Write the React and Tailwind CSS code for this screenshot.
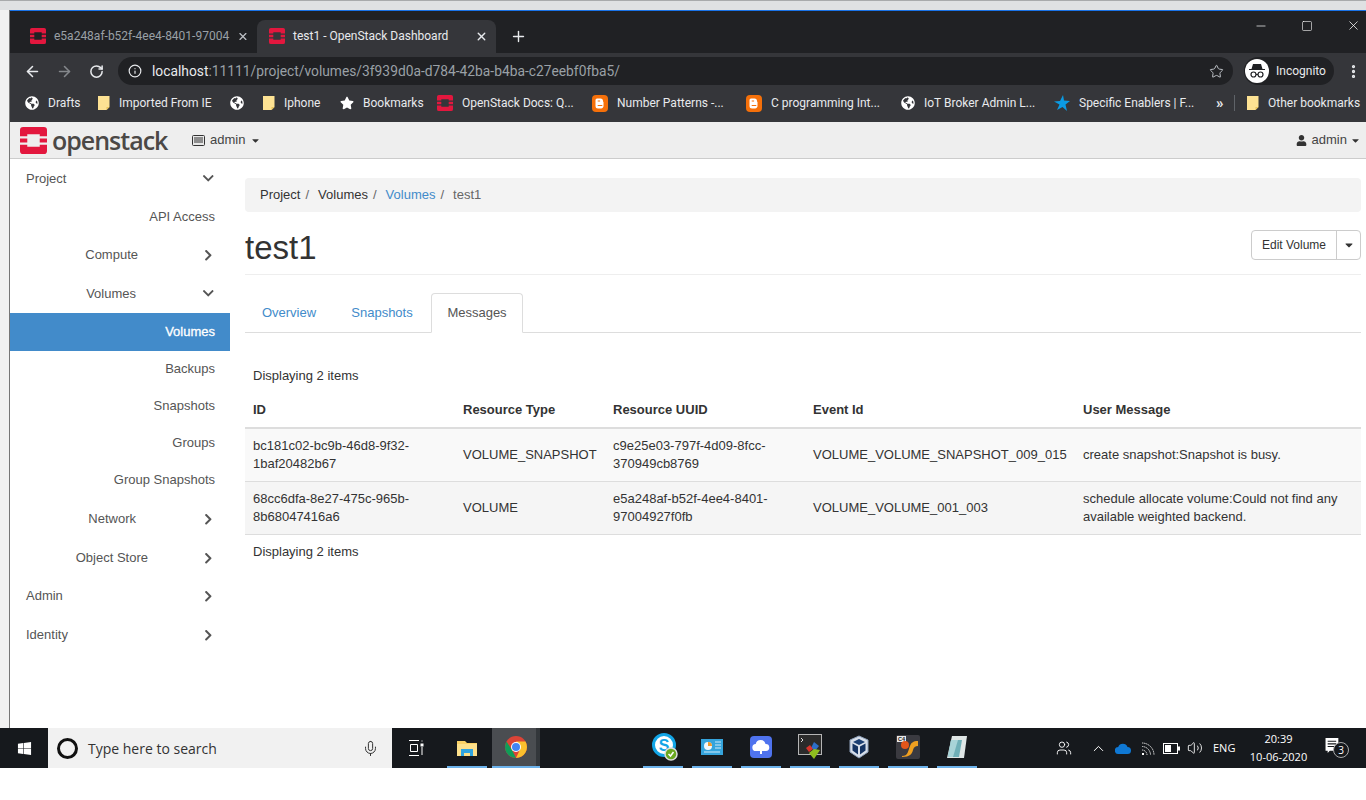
import React from "react";
import { ArrowLeft, ArrowRight, RotateCw, Info, Star, X, Plus, Minus, Square, EllipsisVertical, Mic, ChevronUp, Volume2, Users } from "lucide-react";
import { FaChevronDown, FaChevronRight, FaUser, FaCaretDown, FaGlobeAmericas, FaWindows, FaStar } from "react-icons/fa";

const sans = "font-['Liberation_Sans',Arial,sans-serif]";

// OpenStack mark
const OsLogo = ({ size = 16 }) => (
  <svg width={size} height={size} viewBox="0 0 26 26" className="shrink-0">
    <path d="M3 0h20a3 3 0 0 1 3 3v6h-7V7H7v2H0V3a3 3 0 0 1 3-3z" fill="#e3173e" />
    <path d="M0 11h7v4H0zM19 11h7v4h-7z" fill="#e3173e" />
    <path d="M0 17h7v2h12v-2h7v6a3 3 0 0 1-3 3H3a3 3 0 0 1-3-3z" fill="#e3173e" />
  </svg>
);

const Folder = () => (
  <svg width="12" height="16" viewBox="0 0 12 16" className="shrink-0">
    <path d="M0 1h11.5v11l-3 3H0z" fill="#fde293" />
    <path d="M8.5 15v-3h3z" fill="#e8c35c" />
  </svg>
);

const Blogger = () => (
  <svg width="16" height="17" viewBox="0 0 16 17" className="shrink-0">
    <rect width="16" height="17" rx="4" fill="#f5700a" />
    <path d="M5 3.500h3.500a2.500 2.500 0 0 1 2.500 2.500v.8h.5v3.700a2.500 2.500 0 0 1-2.500 3H6a2.500 2.500 0 0 1-2.500-2.500V5A1.500 1.500 0 0 1 5 3.500z" fill="#fff" />
    <path d="M5.700 5.600h2.400v1H5.700zM5.700 10h4.600v1H5.700z" fill="#f5700a" />
  </svg>
);

const Globe = () => <FaGlobeAmericas className="text-[14px] text-white shrink-0" />;

const Bookmark = ({ icon, label, width }) => (
  <div className={`flex items-center gap-[9px] shrink-0 ${width}`}>
    {icon}
    {label && <span className="text-[12px] text-[#e8eaed] whitespace-nowrap">{label}</span>}
  </div>
);

const BrowserChrome = () => (
  <div className="font-['Roboto',sans-serif] border-t border-[#1a73e8]">
    {/* tab strip */}
    <div className="h-[42px] bg-[#202124] flex items-end relative">
      <div className="w-[247px] h-[33px] pl-[20px] pr-[8px] pb-[1px] flex items-center gap-[8px]">
        <OsLogo />
        <span className="flex-1 text-[12px] text-[#9aa0a6] whitespace-nowrap">e5a248af-b52f-4ee4-8401-97004</span>
        <X size={13} strokeWidth={2.5} className="text-[#bdc1c6]" />
      </div>
      <div className="w-[239px] h-[33px] bg-[#35363a] rounded-t-lg pl-[12px] pr-[8px] pb-[1px] flex items-center gap-[8px]">
        <OsLogo />
        <span className="flex-1 text-[12px] text-[#e8eaed] whitespace-nowrap">test1 - OpenStack Dashboard</span>
        <X size={13} strokeWidth={2.5} className="text-[#e8eaed]" />
      </div>
      <Plus size={17} strokeWidth={2} className="text-[#e8eaed] ml-[14px] mb-[8px]" />
      <div className="absolute right-[5px] top-[7px] flex items-center gap-[33px] text-white">
        <Minus size={14} strokeWidth={1.2} />
        <Square size={12} strokeWidth={1.2} />
        <X size={15} strokeWidth={1.2} />
      </div>
    </div>
    {/* address bar */}
    <div className="h-[36px] bg-[#35363a] flex items-center pl-[14px]">
      <ArrowLeft size={17} strokeWidth={2.2} className="text-[#e8eaed]" />
      <ArrowRight size={17} strokeWidth={2.2} className="text-[#85888c] ml-[15px]" />
      <RotateCw size={15} strokeWidth={2.4} className="text-[#e8eaed] ml-[16px]" />
      <div className="ml-[14px] w-[1115px] h-[28px] bg-[#202124] rounded-full flex items-center pl-[10px] pr-[9px]">
        <Info size={14} strokeWidth={2} className="text-[#e8eaed]" />
        <span className="ml-[10px] flex-1 text-[13.8px] text-[#9aa0a6] whitespace-nowrap"><span className="text-[#e8eaed]">localhost</span>:11111/project/volumes/3f939d0a-d784-42ba-b4ba-c27eebf0fba5/</span>
        <Star size={15} strokeWidth={1.6} className="text-[#bdc1c6]" />
      </div>
      <div className="ml-[11px] w-[90px] h-[28px] bg-[#202124] rounded-full flex items-center pl-[1px] gap-[7px]">
        <span className="w-[24px] h-[24px] rounded-full bg-white flex items-center justify-center">
          <svg width="18" height="16" viewBox="0 0 18 16">
            <path d="M5 1h8l1.500 5h2.500v1H1V6h2.500z" fill="#202124" />
            <circle cx="5.500" cy="11.500" r="2.500" fill="none" stroke="#202124" strokeWidth="1.200" />
            <circle cx="12.500" cy="11.500" r="2.500" fill="none" stroke="#202124" strokeWidth="1.200" />
            <path d="M8 11.500h2" stroke="#202124" strokeWidth="1.200" />
          </svg>
        </span>
        <span className="text-[12px] text-[#e8eaed]">Incognito</span>
      </div>
      <EllipsisVertical size={17} strokeWidth={2.6} className="text-[#e8eaed] ml-[11px]" />
    </div>
    {/* bookmarks */}
    <div className="h-[33px] bg-[#35363a] flex items-center pl-[15px] pb-[5px]">
      <Bookmark width="w-[73px]" icon={<Globe />} label="Drafts" />
      <Bookmark width="w-[132px]" icon={<Folder />} label="Imported From IE" />
      <Bookmark width="w-[33px]" icon={<Globe />} label="" />
      <Bookmark width="w-[77px]" icon={<Folder />} label="Iphone" />
      <Bookmark width="w-[97px]" icon={<FaStar className="text-[14px] text-white shrink-0" />} label="Bookmarks" />
      <Bookmark width="w-[155px]" icon={<OsLogo />} label="OpenStack Docs: Q..." />
      <Bookmark width="w-[154px]" icon={<Blogger />} label="Number Patterns -..." />
      <Bookmark width="w-[155px]" icon={<Blogger />} label="C programming Int..." />
      <Bookmark width="w-[153px]" icon={<Globe />} label="IoT Broker Admin L..." />
      <Bookmark
        width="w-[162px]"
        icon={
          <svg width="16" height="16" viewBox="0 0 16 16" className="shrink-0">
            <path d="M9 0l1 5.500L16 6l-4.500 3.500L13 16 8.500 12 3 15l2.500-5.500L0 6.500l6-.5z" fill="#0b9be3" />
          </svg>
        }
        label="Specific Enablers | F..."
      />
      <span className="text-[15px] font-bold leading-none text-[#e8eaed] w-[18px]">»</span>
      <span className="w-px h-[16px] bg-[#5f6368] mr-[12px]" />
      <Bookmark width="w-[115px]" icon={<Folder />} label="Other bookmarks" />
    </div>
  </div>
);

const NavRow = ({ label, right, open, hasChevron, h }) => (
  <div className={`${h} relative flex items-center text-[#555]`}>
    <span className="text-[13px] absolute whitespace-nowrap" style={{ right }}>{label}</span>
    {hasChevron && (
      <span className="absolute right-[16px] text-[#555] text-[12.5px]">
        {open ? <FaChevronDown /> : <FaChevronRight />}
      </span>
    )}
  </div>
);

const TopNavRow = ({ label, open, h }) => (
  <div className={`${h} flex items-center justify-between pl-[16px] pr-[16px] text-[#555]`}>
    <span className="text-[13px]">{label}</span>
    {open ? <FaChevronDown className="text-[12.5px]" /> : <FaChevronRight className="text-[12.5px]" />}
  </div>
);

const Sidebar = () => (
  <aside className="w-[220px] shrink-0">
    <TopNavRow label="Project" open h="h-[39px]" />
    <NavRow label="API Access" right={15} h="h-[38px]" />
    <NavRow label="Compute" right={92} hasChevron h="h-[38px]" />
    <NavRow label="Volumes" right={94} hasChevron open h="h-[39px]" />
    <div className="h-[38px] bg-[#428bca] flex items-center justify-end pr-[15px] text-[13px] text-white [-webkit-text-stroke:0.3px_white]">Volumes</div>
    <NavRow label="Backups" right={15} h="h-[36px]" />
    <NavRow label="Snapshots" right={15} h="h-[37px]" />
    <NavRow label="Groups" right={15} h="h-[37px]" />
    <NavRow label="Group Snapshots" right={15} h="h-[38px]" />
    <NavRow label="Network" right={94} hasChevron h="h-[40px]" />
    <NavRow label="Object Store" right={82} hasChevron h="h-[38px]" />
    <TopNavRow label="Admin" h="h-[38px]" />
    <TopNavRow label="Identity" h="h-[40px]" />
  </aside>
);

const messages = [
  {
    id: "bc181c02-bc9b-46d8-9f32-1baf20482b67",
    type: "VOLUME_SNAPSHOT",
    uuid: "c9e25e03-797f-4d09-8fcc-370949cb8769",
    event: "VOLUME_VOLUME_SNAPSHOT_009_015",
    message: "create snapshot:Snapshot is busy.",
    bg: "bg-[#f9f9f9]",
  },
  {
    id: "68cc6dfa-8e27-475c-965b-8b68047416a6",
    type: "VOLUME",
    uuid: "e5a248af-b52f-4ee4-8401-97004927f0fb",
    event: "VOLUME_VOLUME_001_003",
    message: "schedule allocate volume:Could not find any available weighted backend.",
    bg: "bg-[#f5f5f5]",
  },
];

const MessagesTable = () => (
  <table className="w-[1116px] table-fixed border-collapse text-[13px] leading-[18px] text-[#333]">
    <colgroup>
      <col className="w-[210px]" />
      <col className="w-[150px]" />
      <col className="w-[200px]" />
      <col className="w-[270px]" />
      <col />
    </colgroup>
    <thead>
      <tr className="h-[38px] border-b-2 border-[#ddd] text-left">
        <th className="px-2 pt-[3px] font-bold">ID</th>
        <th className="px-2 pt-[3px] font-bold">Resource Type</th>
        <th className="px-2 pt-[3px] font-bold">Resource UUID</th>
        <th className="px-2 pt-[3px] font-bold">Event Id</th>
        <th className="px-2 pt-[3px] font-bold">User Message</th>
      </tr>
    </thead>
    <tbody>
      {messages.map((m) => (
        <tr key={m.id} className={`h-[53px] border-b border-[#ddd] ${m.bg}`}>
          <td className="px-2 break-words">{m.id}</td>
          <td className="px-2">{m.type}</td>
          <td className="px-2 break-words">{m.uuid}</td>
          <td className="px-2 whitespace-nowrap">{m.event}</td>
          <td className="px-2">{m.message}</td>
        </tr>
      ))}
    </tbody>
  </table>
);

const Content = () => (
  <main className="flex-1 pl-[15px] pr-[5px] pt-[19px]">
    <div className="h-[34px] bg-[#f3f3f3] rounded flex items-center px-[15px] text-[13px] text-[#333]">
      <span>Project</span>
      <span className="text-[#666] ml-[5px] mr-[9px]">/</span>
      <span>Volumes</span>
      <span className="text-[#666] ml-[5px] mr-[9px]">/</span>
      <span className="text-[#428bca]">Volumes</span>
      <span className="text-[#666] ml-[5px] mr-[9px]">/</span>
      <span className="text-[#666]">test1</span>
    </div>
    <div className="h-[63px] flex items-center justify-between border-b border-[#eee]">
      <h1 className="text-[33px] text-[#333] leading-none mt-[9px]">test1</h1>
      <div className="flex h-[30px] mt-[4px] border border-[#ccc] rounded text-[12px] text-[#333]">
        <span className="w-[85px] flex items-center justify-center border-r border-[#ccc]">Edit Volume</span>
        <span className="w-[23px] flex items-center justify-center"><FaCaretDown className="text-[12px]" /></span>
      </div>
    </div>
    <div className="mt-[18px] h-[40px] flex items-end border-b border-[#ddd] text-[13px]">
      <span className="w-[88px] h-[39px] flex items-center justify-center text-[#428bca]">Overview</span>
      <span className="w-[98px] h-[39px] flex items-center justify-center text-[#428bca]">Snapshots</span>
      <span className="w-[92px] h-[40px] -mb-px bg-white border border-[#ddd] border-b-white rounded-t flex items-center justify-center text-[#555]">Messages</span>
    </div>
    <div className="mt-[33px] pl-2 h-[20px] text-[13px] leading-[20px] text-[#333]">Displaying 2 items</div>
    <div className="mt-[4px]"><MessagesTable /></div>
    <div className="mt-[7px] pl-2 text-[13px] leading-[20px] text-[#333]">Displaying 2 items</div>
  </main>
);

const Dashboard = () => (
  <div className={`flex-1 bg-white flex flex-col ${sans} min-h-0`}>
    <header className="h-[37px] bg-[#eee] border-b border-[#ccc] flex items-center pl-[10px] pr-[5px] shrink-0">
      <OsLogo size={27} />
      <span className="ml-[5px] font-['Open_Sans',sans-serif] font-semibold text-[25px] leading-none tracking-[-1px] text-[#4b4846] w-[117px]">openstack</span>
      <svg width="13" height="11" viewBox="0 0 13 11" className="ml-[23px]">
        <rect x="0.500" y="0.500" width="12" height="10" rx="1" fill="#e8e8e8" stroke="#333" />
        <path d="M2 3h9M2 5h9M2 7h9" stroke="#333" />
      </svg>
      <span className="ml-[5px] text-[13px] text-[#444]">admin</span>
      <FaCaretDown className="ml-[5px] text-[11px] text-[#333]" />
      <div className="ml-auto flex items-center text-[13px] text-[#444]">
        <FaUser className="text-[11px] text-[#333] mr-[5px]" />
        <span>admin</span>
        <FaCaretDown className="ml-[3px] text-[11px] text-[#333]" />
      </div>
    </header>
    <div className="flex flex-1 min-h-0">
      <Sidebar />
      <Content />
    </div>
  </div>
);

const pinned = [
  // skype
  <svg key="skype" width="26" height="30" viewBox="0 0 26 30" className="ml-[3px]">
    <circle cx="12" cy="13" r="10.500" fill="#fff" stroke="#12a5e6" strokeWidth="3" />
    <text x="12" y="19" textAnchor="middle" fontSize="16" fontWeight="700" fill="#12a5e6" fontFamily="Liberation Sans">S</text>
    <circle cx="19" cy="22" r="6" fill="#6aa820" stroke="#ddd" strokeWidth="1.500" />
    <path d="M16.500 22l2 2 3-4" fill="none" stroke="#fff" strokeWidth="1.500" />
  </svg>,
  // control panel
  <svg key="panel" width="22" height="16" viewBox="0 0 22 16">
    <rect width="22" height="16" fill="#35a4dc" />
    <circle cx="7" cy="7" r="4" fill="#f3f9fc" />
    <path d="M7 7V3a4 4 0 0 1 4 4z" fill="#f09a2e" />
    <path d="M14 3h6M14 6h6M14 9h6M3 13h16" stroke="#cfeafa" strokeWidth="1.200" />
  </svg>,
  // cloud app
  <svg key="cloud" width="22" height="22" viewBox="0 0 22 22">
    <rect width="22" height="22" rx="4" fill="#4f73ee" />
    <path d="M6 15a3.500 3.500 0 0 1-.3-7A5 5 0 0 1 15.500 8 3.500 3.500 0 0 1 16 15h-4v3h-2v-3z" fill="#fff" />
  </svg>,
  // terminal with puzzle
  <svg key="term" width="24" height="26" viewBox="0 0 24 26">
    <rect x="0.500" y="0.500" width="23" height="20" fill="#2b2b2b" stroke="#b5b5b5" />
    <path d="M3 4l2 2-2 2" fill="none" stroke="#ddd" />
    <path d="M16 8l5 4-4 5-4-3z" fill="#2c6fc9" />
    <path d="M8 14l4-3 3 4-4 3z" fill="#d9342b" />
    <path d="M11 19l5-4 6 1-6 9z" fill="#8fbf1f" />
  </svg>,
  // virtualbox
  <svg key="vbox" width="20" height="24" viewBox="0 0 20 24">
    <path d="M10 1l9 4v12l-9 6-9-6V5z" fill="#d7dfea" stroke="#8ea1bb" />
    <path d="M10 4l6 3-6 3-6-3z" fill="#1b3f73" />
    <path d="M3.500 8.500l5.500 3v8l-5.500-4zM16.500 8.500l-5.500 3v8l5.500-4z" fill="#153463" />
  </svg>,
  // c4 / orange
  <svg key="c4" width="24" height="24" viewBox="0 0 24 24">
    <rect width="24" height="24" rx="2" fill="#3a3a40" />
    <rect x="1" y="1" width="9" height="6" fill="#e8e8e8" />
    <text x="5.500" y="6" textAnchor="middle" fontSize="5.500" fontWeight="700" fill="#222" fontFamily="Liberation Sans">C4</text>
    <path d="M6 21c6 0 6-5 8-10 1-3 3-5 8-5v5c-3 0-4 1-5 4-1 4-3 7-11 7z" fill="#f0a020" />
    <circle cx="9" cy="10" r="4" fill="#e2561a" />
  </svg>,
  // notepad
  <svg key="note" width="24" height="24" viewBox="0 0 24 24">
    <path d="M7 1h15l-3 22H2z" fill="#dfe6e6" />
    <path d="M6 5h11l-3 17H3z" fill="#6fb0b8" />
    <path d="M6 5h7L8 22H3z" fill="#a8d4d8" />
  </svg>,
];

const Taskbar = () => (
  <div className="h-[40px] bg-[#16191d] flex items-stretch font-['Open_Sans',sans-serif] shrink-0">
    <div className="w-[48px] flex items-center justify-center text-white text-[15px]"><FaWindows /></div>
    <div className="w-[344px] bg-[#f1f1f1] flex items-center pl-[9px] pr-[13px]">
      <span className="w-[21px] h-[21px] rounded-full border-[3px] border-[#111]" />
      <span className="ml-[10px] flex-1 text-[14px] text-[#333]">Type here to search</span>
      <Mic size={17} strokeWidth={1.4} className="text-[#333]" />
    </div>
    <div className="w-[25px] flex items-center justify-center ml-[11px]">
      <svg width="16" height="16" viewBox="0 0 16 16" fill="none" stroke="#fff">
        <path d="M1 .5h10M2.500 4.500h7v7h-7zM1 15.500h10M14 .5v1M14 7v8" />
        <rect x="13" y="4" width="2" height="2" fill="#fff" />
      </svg>
    </div>
    <div className="ml-[19px] w-[40px] flex items-center justify-center border-b-[2px] border-[#6cb2eb]">
      <svg width="20" height="17" viewBox="0 0 20 17">
        <path d="M0 2h8l2 2h10v13H0z" fill="#fad165" />
        <path d="M0 5h20v12H0z" fill="#fde08b" />
        <path d="M4 10h12v7h-3v-3H7v3H4z" fill="#2fa4e0" />
      </svg>
    </div>
    <div className="ml-[5px] w-[44px] pl-[4px] bg-[#4a4d51] flex items-center justify-center border-b-[2px] border-[#6cb2eb]">
      <svg width="22" height="22" viewBox="0 0 22 22">
        <circle cx="11" cy="11" r="11" fill="#db4437" />
        <path d="M11 22a11 11 0 0 1-9.500-16.500L7 14z" fill="#0f9d58" />
        <path d="M11 22a11 11 0 0 0 9.500-16.500H11l4 8z" fill="#fbc02d" />
        <circle cx="11" cy="11" r="5" fill="#fff" />
        <circle cx="11" cy="11" r="4" fill="#4285f4" />
      </svg>
    </div>
    <div className="w-[4px] bg-[#33373b] border-b-[2px] border-[#6cb2eb]" />
    <div className="ml-[103px] flex items-stretch gap-[9px]">
      {pinned.map((icon) => (
        <div key={icon.key} className="w-[40px] flex items-center justify-center border-b-[2px] border-[#6cb2eb]">{icon}</div>
      ))}
    </div>
    <div className="ml-[79px] flex items-center text-white">
      <Users size={16} strokeWidth={1.4} />
      <ChevronUp size={17} strokeWidth={1.4} className="ml-[18px]" />
      <svg width="16" height="11" viewBox="0 0 16 11" className="ml-[8px]">
        <path d="M3.500 11a3.500 3.500 0 0 1-.3-7A5 5 0 0 1 12.500 4 3.500 3.500 0 0 1 12.500 11z" fill="#0f78d4" />
      </svg>
      <svg width="14" height="15" viewBox="0 0 14 15" fill="none" stroke="#ddd" strokeWidth="1" strokeDasharray="1.500 0.600" className="ml-[10px]">
        <path d="M1 2a12 12 0 0 1 12 12M1 5.500a8.500 8.500 0 0 1 8.500 8.500M1 9a5 5 0 0 1 5 5" />
        <rect x="1" y="12" width="2" height="2" fill="#fff" stroke="none" />
      </svg>
      <svg width="17" height="11" viewBox="0 0 17 11" className="ml-[8px]">
        <rect x="0.500" y="0.500" width="14" height="10" fill="none" stroke="#fff" />
        <rect x="2" y="2" width="6" height="7" fill="#fff" />
        <rect x="15" y="3.500" width="2" height="4" fill="#fff" />
      </svg>
      <Volume2 size={16} strokeWidth={1.3} className="ml-[7px]" />
      <span className="ml-[10px] w-[23px] text-[11px]">ENG</span>
      <div className="ml-[14px] w-[57px] flex flex-col items-center text-[11px] leading-[18px]">
        <span>20:39</span>
        <span className="whitespace-nowrap">10-06-2020</span>
      </div>
      <div className="ml-[18px] relative w-[24px] h-[20px]">
        <svg width="16" height="16" viewBox="0 0 14 15">
          <path d="M0 0h12v12H4l-2 2v-2H0z" fill="#fff" />
          <path d="M2 3h8M2 5.500h8M2 8h8" stroke="#16191d" />
        </svg>
        <span className="absolute left-[8px] top-[4px] w-[16px] h-[16px] rounded-full bg-[#16191d] border border-[#aaa] text-[10px] leading-[14px] text-center">3</span>
      </div>
    </div>
  </div>
);

export default function App() {
  return (
    <div className="w-[1366px] h-[800px] flex flex-col bg-white overflow-hidden">
      <div className="h-[10px] bg-[#dfe1e3] border-t border-[#a8aaac] shrink-0" />
      <div className="flex flex-1 min-h-0">
        <div className="w-[10px] bg-[#f2f2f2] border-r border-[#777] shrink-0" />
        <div className="flex-1 flex flex-col min-w-0">
          <BrowserChrome />
          <Dashboard />
        </div>
      </div>
      <Taskbar />
      <div className="h-[32px] bg-white shrink-0" />
    </div>
  );
}
